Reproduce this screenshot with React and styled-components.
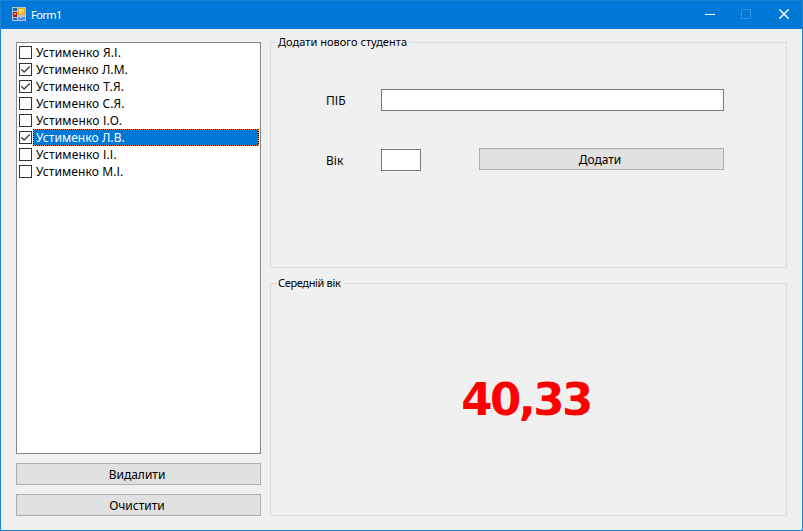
import React, { useState } from "react";
import styled, { createGlobalStyle } from "styled-components";

const GlobalStyle = createGlobalStyle`
  * { box-sizing: border-box; }
  body {
    margin: 0;
    overflow: hidden;
    font: 12px/17px "Noto Sans", "Open Sans", sans-serif;
    color: #000;
  }
`;

const Window = styled.div`
  width: 803px;
  height: 531px;
  display: flex;
  flex-direction: column;
  background: #f0f0f0;
  border: 1px solid #1883d7;
`;

const TitleBar = styled.header`
  height: 28px;
  flex: none;
  display: flex;
  align-items: center;
  padding: 0 0 2px 11px;
  background: #0078d7;
  color: #fff;
`;

const Title = styled.span`
  flex: 1;
  margin-left: 4px;
  padding-top: 1px;
  font-size: 11px;
  letter-spacing: -0.55px;
`;

const CaptionButtons = styled.div`
  display: grid;
  grid-template-columns: 36px 38px 10px;
  margin-right: 13px;

  svg { display: block; }
`;

const Client = styled.main`
  flex: 1;
  display: grid;
  grid-template-columns: 245px 517px;
  column-gap: 9px;
  padding: 13px 0 0 15px;
`;

const LeftColumn = styled.section`
  display: flex;
  flex-direction: column;
  gap: 9px;
`;

const StudentList = styled.ul`
  height: 412px;
  margin: 0;
  padding: 1px;
  list-style: none;
  background: #fff;
  border: 1px solid #828790;
`;

const StudentRow = styled.li`
  height: 17px;
  display: flex;
  align-items: center;
  padding-left: 1px;
`;

const CheckBox = styled.span`
  width: 13px;
  height: 13px;
  flex: none;
  background: #fff;
  border: 1px solid #333;

  svg { display: block; }
`;

const StudentName = styled.span`
  flex: 1;
  height: 17px;
  margin-left: 1px;
  padding-left: 3px;
  line-height: 17px;
  letter-spacing: ${(p) => p.$spacing}px;
  color: ${(p) => (p.$selected ? "#fff" : "#000")};
  background: ${(p) =>
    p.$selected
      ? `repeating-linear-gradient(90deg, #000 0 1px, #ff8728 1px 2px) top / 100% 1px no-repeat,
         repeating-linear-gradient(90deg, #000 0 1px, #ff8728 1px 2px) bottom / 100% 1px no-repeat,
         repeating-linear-gradient(0deg, #000 0 1px, #ff8728 1px 2px) left / 1px 100% no-repeat,
         repeating-linear-gradient(0deg, #000 0 1px, #ff8728 1px 2px) right / 1px 100% no-repeat,
         #0078d7`
      : "transparent"};
`;

const Button = styled.button`
  width: 245px;
  height: 22px;
  padding: 1px 3px 0 0;
  font: inherit;
  line-height: 19px;
  color: #000;
  letter-spacing: 0;
  background: #e1e1e1;
  border: 1px solid #adadad;
  border-radius: 0;
`;

const RightColumn = styled.section`
  display: flex;
  flex-direction: column;
  gap: 15px;
`;

const Group = styled.section`
  position: relative;
  height: ${(p) => p.$height}px;
  border: 1px solid #dcdcdc;
`;

const GroupCaption = styled.h2`
  position: absolute;
  top: -9px;
  left: 6px;
  margin: 0;
  padding: 0 3px 0 1px;
  background: #f0f0f0;
  font-size: 11px;
  font-weight: 400;
  line-height: 16px;
  letter-spacing: ${(p) => p.$spacing}px;
  white-space: nowrap;
`;

const Form = styled.div`
  display: grid;
  grid-template-columns: 55px 98px 245px;
  grid-template-rows: 22px 22px;
  row-gap: 38px;
  padding: 46px 0 0 55px;
`;

const Label = styled.label`
  line-height: 24px;
`;

const TextBox = styled.input`
  width: ${(p) => p.$width}px;
  height: 22px;
  padding: 1px 3px;
  font: inherit;
  background: #fff;
  border: 1px solid #7a7a7a;
  border-radius: 0;
  outline: none;
  grid-column: ${(p) => p.$column};
`;

const AddCell = styled.div`
  margin-top: -1px;
`;

const Average = styled.output`
  display: flex;
  height: 100%;
  align-items: center;
  justify-content: center;
  padding: 0 5px 0 0;
  color: #f00;
  font-family: "DejaVu Sans", sans-serif;
  font-size: 45px;
  font-weight: 700;
  letter-spacing: -2.6px;
`;

const students = [
  ["Устименко Я.І.", false, 0.17],
  ["Устименко Л.М.", true, 0.07],
  ["Устименко Т.Я.", true, 0.2],
  ["Устименко С.Я.", false, 0.12],
  ["Устименко І.О.", false, 0.17],
  ["Устименко Л.В.", true, 0.07],
  ["Устименко І.І.", false, 0.17],
  ["Устименко М.І.", false, 0.1],
];

function FormIcon() {
  return (
    <svg width="15" height="15" viewBox="0 0 15 15" shapeRendering="crispEdges">
      <defs>
        <linearGradient id="gold" x1="0" y1="0" x2="1" y2="1">
          <stop offset="0" stopColor="#fff3a8" />
          <stop offset="1" stopColor="#f5b400" />
        </linearGradient>
      </defs>
      <path d="M0 0h14v14H0z" fill="#b9c4d0" />
      <path d="M1 1h4v3H1zM1 11h4v2H1z" fill="#0870cc" />
      <path d="M6 1h7v7H6z" fill="#e0a81c" />
      <path d="M7 2h5v5H7z" fill="url(#gold)" />
      <path d="M1 5h4v5H1z" fill="#b51616" />
      <path d="M2 6h2v2H2z" fill="#f08070" />
      <path d="M6 10h7v3H6z" fill="#5d8ae6" />
      <path d="M7 10h3v1H7z" fill="#a9c3fa" />
    </svg>
  );
}

function Tick() {
  return (
    <svg width="11" height="11" viewBox="0 0 11 11">
      <path d="M1.2 5.2 4.1 8.1 9.8 2.4" fill="none" stroke="#444" strokeWidth="1.4" />
    </svg>
  );
}

export default function App() {
  const [selected] = useState(5);
  return (
    <>
      <GlobalStyle />
      <Window>
        <TitleBar>
          <FormIcon />
          <Title>Form1</Title>
          <CaptionButtons>
            <svg width="10" height="10"><path d="M0 5.5h10" stroke="#fff" /></svg>
            <svg width="10" height="10"><path d="M.5.5h9v9h-9z" fill="none" stroke="#3392df" /></svg>
            <svg width="10" height="10"><path d="m.3.3 9.4 9.4M9.7.3.3 9.7" stroke="#fff" strokeWidth="1.4" /></svg>
          </CaptionButtons>
        </TitleBar>
        <Client>
          <LeftColumn>
            <StudentList>
              {students.map(([name, checked, spacing], i) => (
                <StudentRow key={name}>
                  <CheckBox>{checked && <Tick />}</CheckBox>
                  <StudentName $selected={i === selected} $spacing={spacing}>{name}</StudentName>
                </StudentRow>
              ))}
            </StudentList>
            <Button>Видалити</Button>
            <Button>Очистити</Button>
          </LeftColumn>
          <RightColumn>
            <Group $height={226}>
              <GroupCaption $spacing={0.03}>Додати нового студента</GroupCaption>
              <Form>
                <Label htmlFor="name">ПІБ</Label>
                <TextBox id="name" $width={343} $column="2 / 4" />
                <Label htmlFor="age">Вік</Label>
                <TextBox id="age" $width={40} $column="2" />
                <AddCell><Button>Додати</Button></AddCell>
              </Form>
            </Group>
            <Group $height={233}>
              <GroupCaption $spacing={-0.35}>Середній вік</GroupCaption>
              <Average>40,33</Average>
            </Group>
          </RightColumn>
        </Client>
      </Window>
    </>
  );
}
